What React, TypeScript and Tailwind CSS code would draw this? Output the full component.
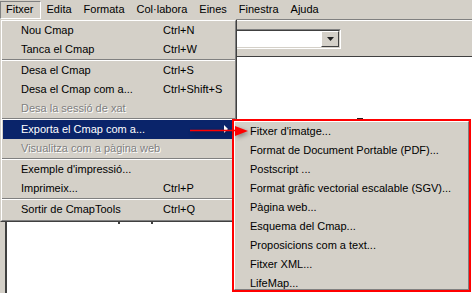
import React from "react";

type Entry =
  | { label: string; shortcut?: string; disabled?: boolean; active?: boolean; sub?: boolean }
  | "sep";

const menuBar = ["Fitxer", "Edita", "Formata", "Col·labora", "Eines", "Finestra", "Ajuda"];

const fileMenu: Entry[] = [
  { label: "Nou Cmap", shortcut: "Ctrl+N" },
  { label: "Tanca el Cmap", shortcut: "Ctrl+W" },
  "sep",
  { label: "Desa el Cmap", shortcut: "Ctrl+S" },
  { label: "Desa el Cmap com a...", shortcut: "Ctrl+Shift+S" },
  { label: "Desa la sessió de xat", disabled: true },
  "sep",
  { label: "Exporta el Cmap com a...", active: true, sub: true },
  { label: "Visualitza com a pàgina web", disabled: true },
  "sep",
  { label: "Exemple d'impressió..." },
  { label: "Imprimeix...", shortcut: "Ctrl+P" },
  "sep",
  { label: "Sortir de CmapTools", shortcut: "Ctrl+Q" },
];

const exportMenu = [
  "Fitxer d'imatge...",
  "Format de Document Portable (PDF)...",
  "Postscript ...",
  "Format gràfic vectorial escalable (SGV)...",
  "Pàgina web...",
  "Esquema del Cmap...",
  "Proposicions com a text...",
  "Fitxer XML...",
  "LifeMap...",
];

export default function App() {
  return (
    <div className="relative w-[472px] h-[293px] overflow-hidden bg-[#d4d0c8] font-['Liberation_Sans',Arial,sans-serif] text-[11px] text-black">
      {/* MENU BAR */}
      <div className="flex h-[19px] items-center">
        {menuBar.map((m, i) => (
          <div
            key={m}
            className={
              i === 0
                ? "h-[18px] flex items-center pl-[5px] pr-[6px] border border-[#808080] border-r-white border-b-white"
                : "h-[18px] flex items-center px-[6px]"
            }
          >
            {m}
          </div>
        ))}
      </div>
      <div className="h-px bg-[#808080]" />
      <div className="h-px bg-white" />

      {/* TOOLBAR */}
      <div className="flex items-center h-[35px] pl-[160px]">
        <div className="flex w-[181px] h-[20px] border border-[#808080] border-r-white border-b-white">
          <div className="flex-1 flex border border-[#404040] border-r-[#d4d0c8] border-b-[#d4d0c8] bg-white">
            <div className="flex-1" />
            <div className="w-[18px] flex items-center justify-center bg-[#d4d0c8] border border-white border-r-[#404040] border-b-[#404040]">
              <svg width="7" height="4" viewBox="0 0 7 4">
                <path d="M0 0h7L3.5 4z" fill="#202020" />
              </svg>
            </div>
          </div>
        </div>
      </div>

      {/* CANVAS */}
      <div className="flex h-[238px] border-t border-[#404040]">
        <div className="w-[5px] bg-[#d4d0c8]" />
        <div className="w-[2px] bg-[#404040]" />
        <div className="relative flex-1 bg-white">
          <div className="absolute left-[111px] top-[165px] w-[2px] h-[2px] bg-[#404040]" />
          <div className="absolute left-[144px] top-[165px] w-[2px] h-[2px] bg-[#404040]" />
          <div className="absolute left-[350px] top-[61px] w-[6px] h-[2px] bg-[#202020]" />
        </div>
      </div>

      {/* FILE DROPDOWN */}
      <div className="absolute left-0 top-[19px] w-[237px] border border-[#d4d0c8] border-r-[#404040] border-b-[#404040]">
        <div className="border border-white border-r-[#808080] border-b-[#808080] bg-[#d4d0c8] pb-[1px]">
          {fileMenu.map((e, i) =>
            e === "sep" ? (
              <div key={i} className="h-[2px] flex flex-col">
                <div className="h-px bg-[#808080]" />
                <div className="h-px bg-white" />
              </div>
            ) : (
              <div
                key={i}
                className={
                  "h-[19px] flex items-center ml-[1px] mr-[2px] pl-[18px] relative " +
                  (e.active ? "bg-[#0a246a] text-white" : "")
                }
              >
                <span
                  className={
                    "w-[142px] whitespace-nowrap " +
                    (e.disabled ? "text-[#808080] [text-shadow:1px_1px_0_#ffffff]" : "")
                  }
                >
                  {e.label}
                </span>
                {e.shortcut && <span className="whitespace-nowrap">{e.shortcut}</span>}
                {e.sub && (
                  <svg className="absolute right-[5px] top-[5px]" width="4" height="8" viewBox="0 0 4 8">
                    <path d="M0 0L4 4L0 8z" fill="#ffffff" />
                  </svg>
                )}
              </div>
            )
          )}
        </div>
      </div>

      {/* EXPORT SUBMENU */}
      <div className="absolute left-[232px] top-[119px] w-[239px] h-[173px] border-2 border-[#ff0000]">
        <div className="h-full border border-white border-r-[#808080] border-b-[#808080] bg-[#d4d0c8]">
          {exportMenu.map((s) => (
            <div key={s} className="h-[19px] flex items-center pl-[15px] whitespace-nowrap">
              {s}
            </div>
          ))}
        </div>
      </div>

      {/* ANNOTATION ARROW */}
      <svg className="absolute left-[188px] top-[123px] [filter:drop-shadow(2px_2px_2px_rgba(0,0,0,0.35))]" width="64" height="16" viewBox="0 0 64 16">
        <path d="M2 7.5H48" stroke="#ff0000" strokeWidth="1.6" />
        <path d="M47 3L60 8L47 13z" fill="#ff0000" />
      </svg>
    </div>
  );
}
